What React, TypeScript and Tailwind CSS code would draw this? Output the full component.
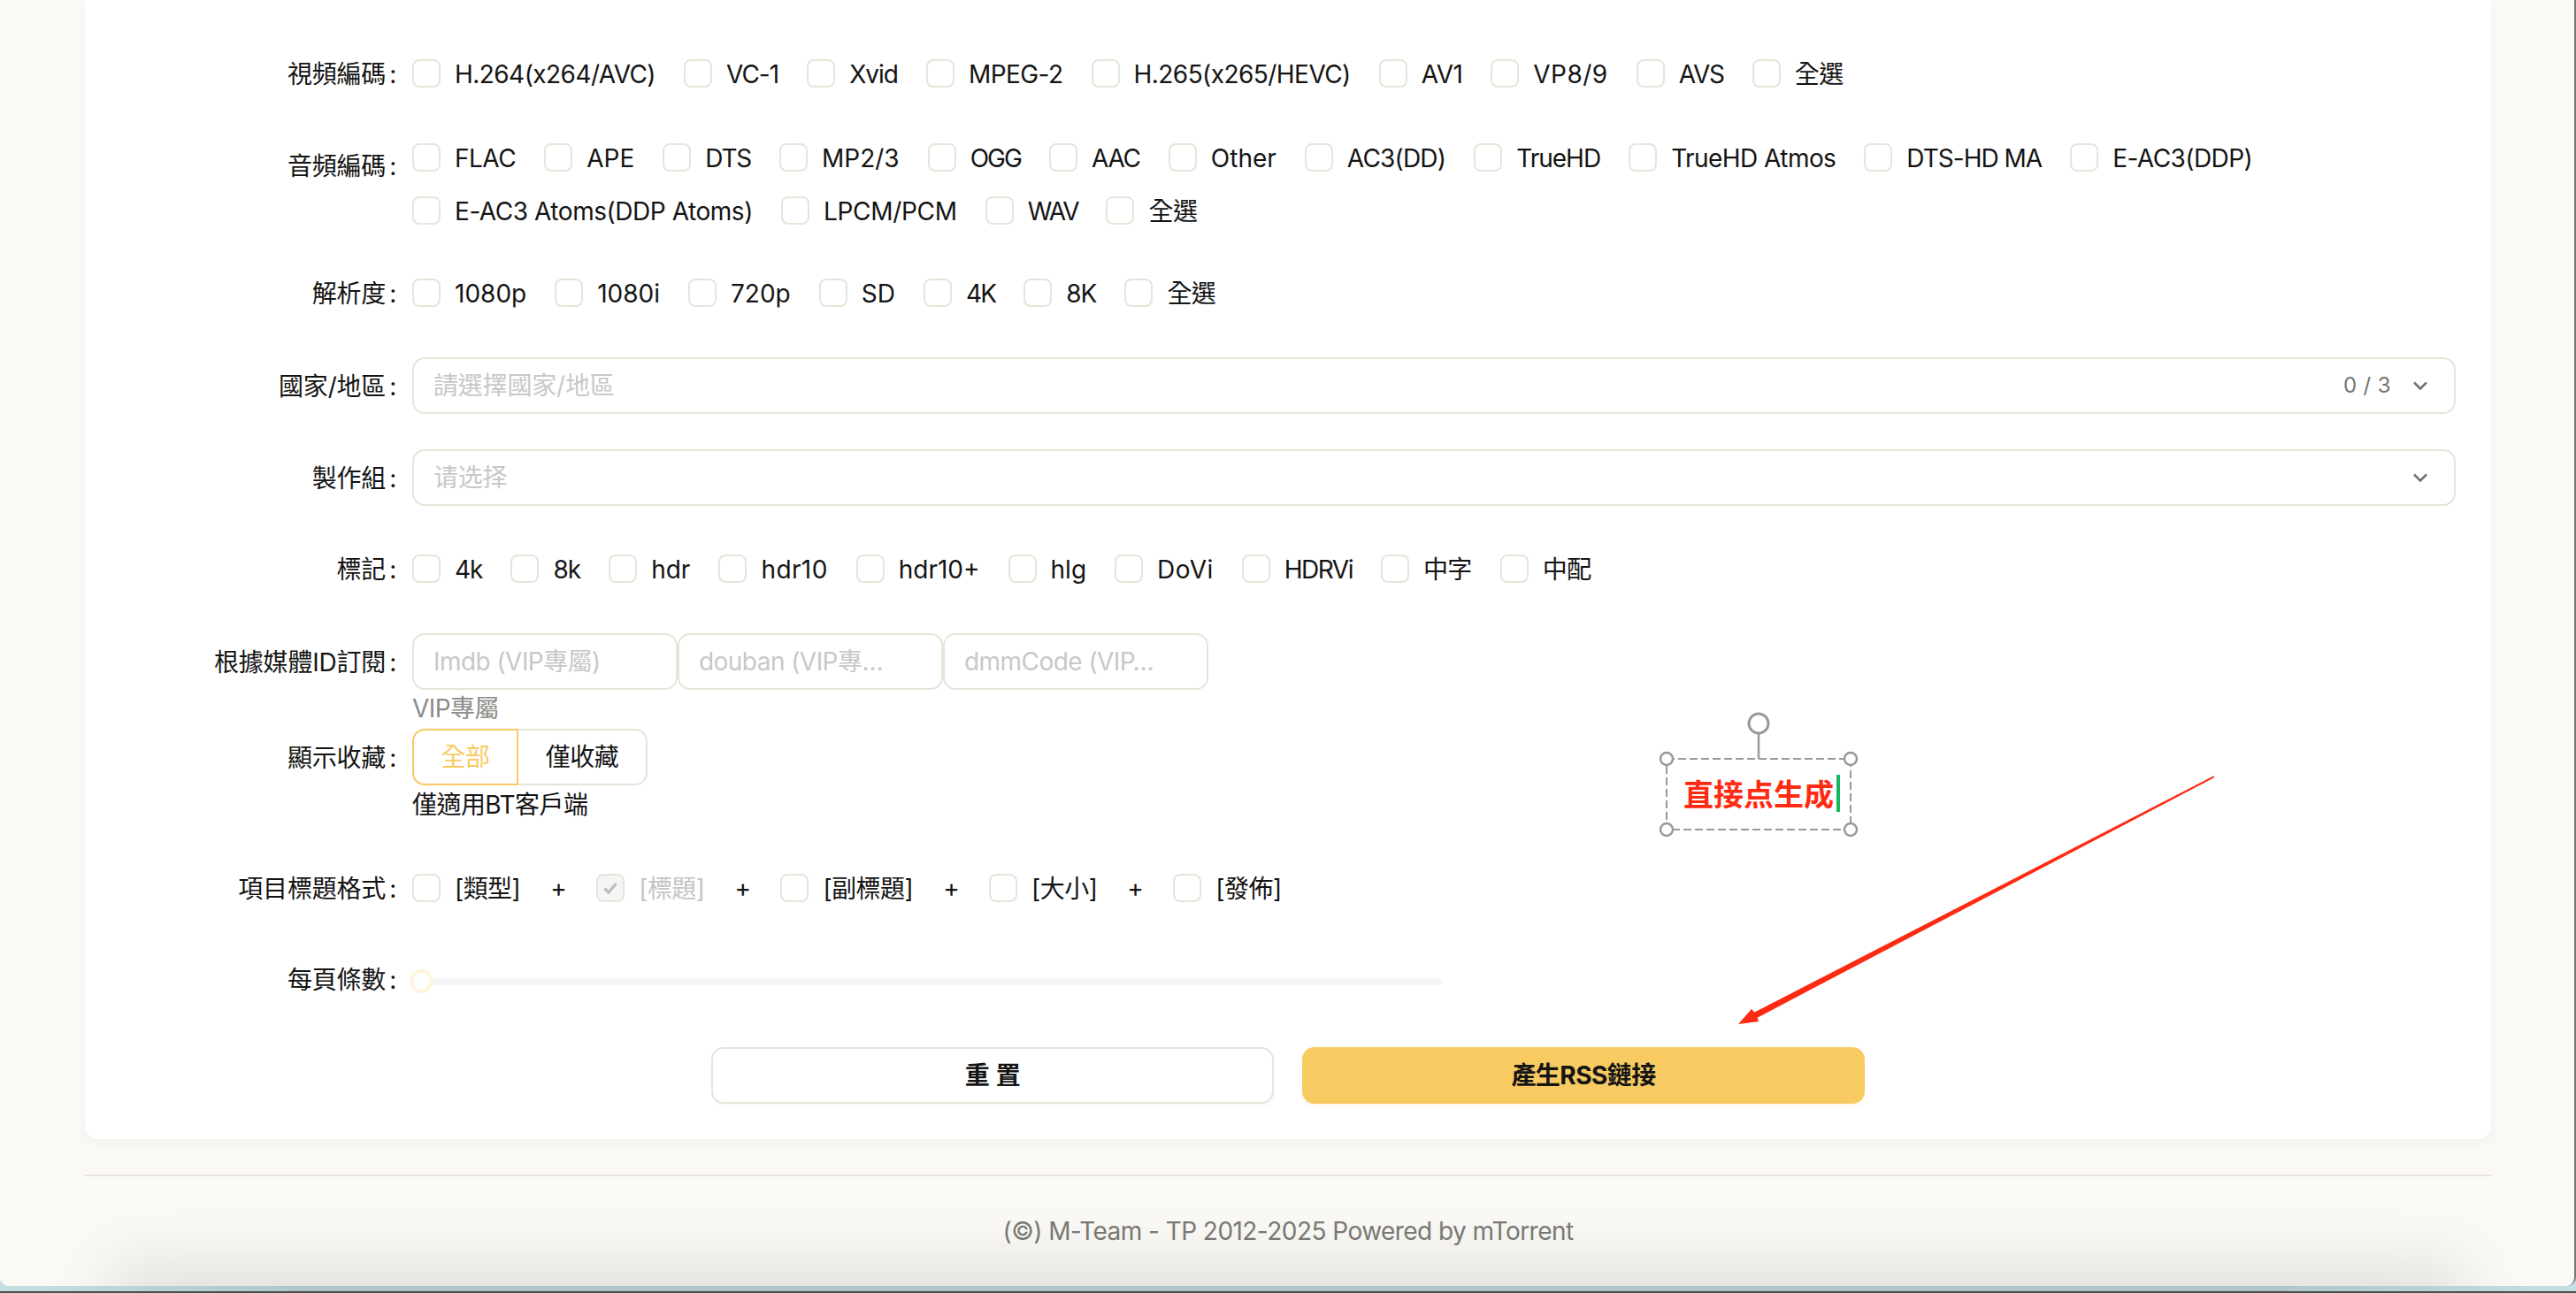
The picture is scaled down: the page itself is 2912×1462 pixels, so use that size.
import React from "react";

type Item = [string, string?];

const video: Item[] = [
  ["H.264(x264/AVC)"],
  ["VC-1", "tracking-[-1px]"],
  ["Xvid", "tracking-[-1px]"],
  ["MPEG-2"],
  ["H.265(x265/HEVC)"],
  ["AV1"],
  ["VP8/9", "tracking-[0.5px]"],
  ["AVS", "tracking-[-1.2px]"],
  ["全選"],
];
const audio1: Item[] = [
  ["FLAC", "tracking-[-0.5px]"],
  ["APE", "tracking-[0px]"],
  ["DTS", "tracking-[-1.2px]"],
  ["MP2/3", "tracking-[0px]"],
  ["OGG", "tracking-[-2px]"],
  ["AAC", "tracking-[-1.2px]"],
  ["Other", "tracking-[0px]"],
  ["AC3(DD)", "tracking-[-0.8px]"],
  ["TrueHD", "tracking-[-1px]"],
  ["TrueHD Atmos"],
  ["DTS-HD MA", "tracking-[-1px]"],
  ["E-AC3(DDP)"],
];
const audio2: Item[] = [
  ["E-AC3 Atoms(DDP Atoms)", "tracking-[-0.45px]"],
  ["LPCM/PCM", "tracking-[-0.3px]"],
  ["WAV", "tracking-[-2px]"],
  ["全選"],
];
const resolution: Item[] = [
  ["1080p", "tracking-[0px]"],
  ["1080i", "tracking-[0px]"],
  ["720p", "tracking-[0px]"],
  ["SD", "tracking-[0px]"],
  ["4K", "tracking-[-1.8px]"],
  ["8K", "tracking-[-1px]"],
  ["全選"],
];
const tags: Item[] = [
  ["4k", "tracking-[-1px]"],
  ["8k", "tracking-[-1px]"],
  ["hdr", "tracking-[0px]"],
  ["hdr10", "tracking-[0.4px]"],
  ["hdr10+", "tracking-[0px]"],
  ["hlg", "tracking-[0px]"],
  ["DoVi", "tracking-[0.5px]"],
  ["HDRVi", "tracking-[-1.5px]"],
  ["中字"],
  ["中配"],
];

const Check = ({ label, track, disabled }: { label: string; track?: string; disabled?: boolean }) => (
  <label className="flex items-center mr-[16px]">
    <span
      className={`w-[32px] h-[32px] rounded-[8px] border-2 border-[#e8e4da] flex items-center justify-center ${
        disabled ? "bg-[#f5f5f5]" : "bg-white"
      }`}
    >
      {disabled && (
        <svg width="20" height="20" viewBox="0 0 20 20" fill="none">
          <path d="M3.5 10.5 L8 15 L16.5 5" stroke="#bdbdbd" strokeWidth="3.4" />
        </svg>
      )}
    </span>
    <span className={`px-[16px] pt-[2px] ${disabled ? "text-[#c4c4c2]" : ""} ${track ?? ""}`}>{label}</span>
  </label>
);

const Line = ({ items }: { items: Item[] }) => (
  <div className="flex items-center h-[60px]">
    {items.map(([t, track], i) => (
      <Check key={i} label={t} track={track} />
    ))}
  </div>
);

const Label = ({ text, className }: { text: string; className?: string }) => (
  <div
    className={`w-[370px] shrink-0 pr-[18px] pt-[2px] tracking-[-0.2px] flex justify-end items-center h-[60px] ${className ?? ""}`}
  >
    {text}
    <span className="ml-[4px]">:</span>
  </div>
);

const Chevron = () => (
  <svg width="16" height="10" viewBox="0 0 16 10" fill="none" className="ml-[25px]">
    <path d="M1 1.5 L8 8.5 L15 1.5" stroke="#75736d" strokeWidth="2.6" />
  </svg>
);

const Select = ({ placeholder, count }: { placeholder: string; count?: string }) => (
  <div className="h-[64px] flex-1 border-2 border-[#e8e4da] rounded-[14px] pl-[22px] pr-[30px] flex items-center justify-between">
    <span className="text-[#c8c8c6] tracking-[-0.2px]">{placeholder}</span>
    <span className="flex items-center">
      {count && <span className="text-[24px] text-[#75736d] tracking-[0.4px]">{count}</span>}
      <Chevron />
    </span>
  </div>
);

const IdInput = ({ placeholder }: { placeholder: string }) => (
  <input
    readOnly
    placeholder={placeholder}
    className="w-[300px] h-[64px] border-2 border-[#e8e4da] rounded-[14px] px-[22px] outline-none placeholder:text-[#c8c8c6]"
  />
);

const Plus = () => <span className="ml-[2px] mr-[34px]">+</span>;

export default function App() {
  return (
    <div
      className="relative h-[1462px] overflow-hidden text-[28px] tracking-[-0.55px] text-[#141414] bg-[linear-gradient(to_right,#c5dfe3,#afc5ca_12%,#afc5ca_88%,#c5dfe3)] border-b-2 border-[#46504f]"
      style={{ fontFamily: 'Inter, "Noto Sans CJK TC", sans-serif' }}
    >
      <div className="relative h-[1454px] overflow-hidden rounded-b-[10px] bg-[#faf9f5] border-r-2 border-[#777777] pl-[96px] pr-[94px] flex flex-col">
        <main className="bg-white rounded-b-[16px] shadow-[0_4px_14px_rgba(0,0,0,0.035)] pt-[53px] pb-[40px] pr-[40px]">
          <div className="flex">
            <Label text="視頻編碼" />
            <Line items={video} />
          </div>

          <div className="flex mt-[35px]">
            <Label text="音頻編碼" className="mt-[9px]" />
            <div>
              <Line items={audio1} />
              <Line items={audio2} />
            </div>
          </div>

          <div className="flex mt-[33px]">
            <Label text="解析度" />
            <Line items={resolution} />
          </div>

          <div className="flex items-center mt-[43px]">
            <Label text="國家/地區" />
            <Select placeholder="請選擇國家/地區" count="0 / 3" />
          </div>

          <div className="flex items-center mt-[40px]">
            <Label text="製作組" />
            <Select placeholder="请选择" />
          </div>

          <div className="flex mt-[41px]">
            <Label text="標記" />
            <Line items={tags} />
          </div>

          <div className="flex mt-[43px]">
            <Label text="根據媒體ID訂閱" className="h-[64px]" />
            <div>
              <div className="flex">
                <IdInput placeholder="Imdb (VIP專屬)" />
                <IdInput placeholder="douban (VIP專…" />
                <IdInput placeholder="dmmCode (VIP…" />
              </div>
              <div className="h-[40px] leading-[42px] text-[#8c8c8a]">VIP專屬</div>
            </div>
          </div>

          <div className="flex mt-[4px]">
            <Label text="顯示收藏" className="h-[64px]" />
            <div>
              <div className="flex h-[64px]">
                <div className="w-[120px] border-2 border-[#f7ca62] rounded-l-[14px] flex items-center justify-center text-[#f7ca62]">
                  全部
                </div>
                <div className="w-[146px] border-2 border-l-0 border-[#e8e4da] rounded-r-[14px] flex items-center justify-center">
                  僅收藏
                </div>
              </div>
              <div className="h-[44px] leading-[44px]">僅適用BT客戶端</div>
            </div>
          </div>

          <div className="flex mt-[42px]">
            <Label text="項目標題格式" />
            <div className="flex items-center h-[60px]">
              <Check label="[類型]" />
              <Plus />
              <Check label="[標題]" disabled />
              <Plus />
              <Check label="[副標題]" />
              <Plus />
              <Check label="[大小]" />
              <Plus />
              <Check label="[發佈]" />
            </div>
          </div>

          <div className="flex mt-[46px]">
            <Label text="每頁條數" className="-mt-[3px]" />
            <div className="relative w-[1164px] h-[60px] flex items-center">
              <div className="w-full h-[8px] rounded-full bg-[#f5f5f5]" />
              <div className="absolute -left-[3px] top-[16px] w-[27px] h-[27px] rounded-full bg-white border-[4px] border-[#fff5dc]" />
            </div>
          </div>

          <div className="flex justify-center gap-[32px] mt-[44px] pl-[40px] font-bold">
            <button className="w-[636px] h-[64px] rounded-[14px] bg-white border-2 border-[#e8e4da] shadow-[0_4px_0_rgba(0,0,0,0.02)]">
              重&thinsp;&thinsp;置
            </button>
            <button className="w-[636px] h-[64px] rounded-[14px] bg-[#f7ca62] shadow-[0_4px_0_rgba(247,202,98,0.1)]">
              產生RSS鏈接
            </button>
          </div>
        </main>

        <footer className="mt-[40px] border-t-2 border-[#e8e2da] text-center text-[#7b7a75] pt-[40px] leading-[44px]">
          (©) M-Team - TP 2012-2025 Powered by mTorrent
        </footer>

        {/* shadow of the window lying over the bottom of this one */}
        <div className="absolute left-[150px] right-[150px] -bottom-[40px] h-[40px] shadow-[0_0_70px_26px_rgba(0,0,0,0.1)] bg-black/10" />

        {/* screenshot markup drawn on top of the page */}
        <svg className="absolute left-0 top-0 pointer-events-none" width="2912" height="1462" fill="none">
          <path d="M1988 830 V858" stroke="#999999" strokeWidth="2.5" />
          <circle cx="1988" cy="818" r="11" stroke="#999999" strokeWidth="3" fill="white" />
          <rect x="1884" y="858" width="208" height="80" stroke="#999999" strokeWidth="2" strokeDasharray="9 4" />
          <circle cx="1884" cy="858" r="7" stroke="#999999" strokeWidth="2.5" fill="white" />
          <circle cx="2092" cy="858" r="7" stroke="#999999" strokeWidth="2.5" fill="white" />
          <circle cx="1884" cy="938" r="7" stroke="#999999" strokeWidth="2.5" fill="white" />
          <circle cx="2092" cy="938" r="7" stroke="#999999" strokeWidth="2.5" fill="white" />
          <path
            d="M2503 877 L2502.5 879.5 L1986.6 1150.7 L1988 1155 L1965 1158 L1980 1141 L1983.4 1144.5 Z"
            fill="#ff2a12"
          />
        </svg>
        <div
          className="absolute left-[1903px] top-[876px] h-[42px] flex items-center text-[34px] leading-none tracking-normal font-bold text-[#ff2a12]"
          style={{ fontFamily: '"Noto Sans CJK SC", sans-serif' }}
        >
          直接点生成
          <span className="w-[4px] h-[42px] ml-[3px] bg-[#12b85a]" />
        </div>
      </div>
    </div>
  );
}
